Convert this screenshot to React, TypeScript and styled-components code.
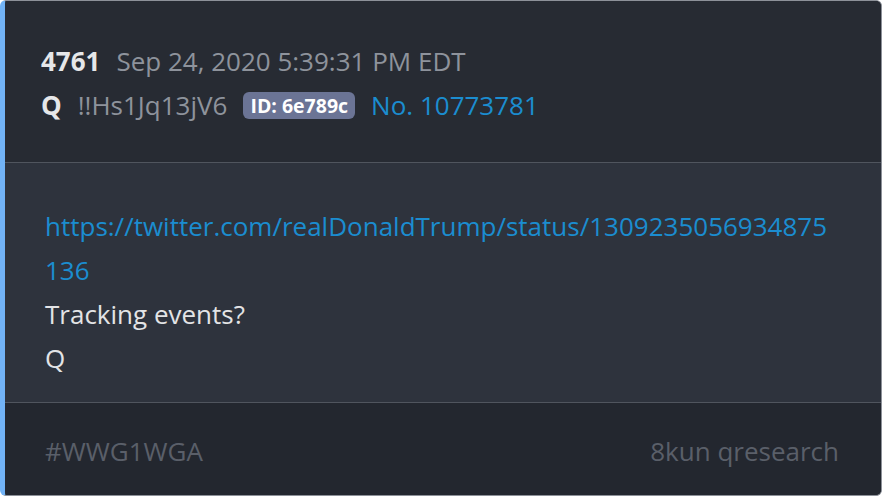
import React from 'react';
import styled, { createGlobalStyle } from 'styled-components';

const GlobalStyle = createGlobalStyle`
  html, body {
    margin: 0;
    padding: 0;
    background: #ffffff;
  }
  body {
    font-family: "Open Sans", "Liberation Sans", sans-serif;
  }
`;

const Card = styled.article`
  box-sizing: border-box;
  width: 882px;
  height: 496px;
  display: flex;
  flex-direction: column;
  border: 1px solid #8d9199;
  border-left: 5px solid #72b3f6;
  border-radius: 6px;
  overflow: hidden;
  background: #2e333d;
  font-size: 26px;
  line-height: 44px;
`;

const Header = styled.header`
  background: #272b33;
  padding: 38px 40px 35px 36px;
  border-bottom: 1px solid #50555e;
`;

const MetaRow = styled.div`
  display: flex;
  align-items: center;
  gap: 16px;
`;

const Strong = styled.span`
  font-weight: 700;
  color: #e6e7e9;
`;

const Muted = styled.span`
  color: #8e939c;
`;

const IdBadge = styled.span`
  background: #6b7495;
  color: #ffffff;
  font-weight: 700;
  font-size: 19.5px;
  line-height: 27px;
  padding: 0 7px;
  border-radius: 6px;
`;

const PostLink = styled.a`
  color: #1b8dd0;
  text-decoration: none;
`;

const Body = styled.section`
  flex: 1;
  padding: 41px 46px 21px 40px;
  color: #e3e4e6;
  border-bottom: 1px solid #50555e;
`;

const Line = styled.div`
  word-break: break-all;
`;

const Footer = styled.footer`
  background: #23272f;
  display: flex;
  justify-content: space-between;
  padding: 26px 42px 22px 40px;
  color: #5a5f69;
`;

export default function App() {
  return (
    <>
      <GlobalStyle />
      <Card>
        <Header>
          <MetaRow>
            <Strong>4761</Strong>
            <Muted>Sep 24, 2020 5:39:31 PM EDT</Muted>
          </MetaRow>
          <MetaRow>
            <Strong>Q</Strong>
            <Muted>!!Hs1Jq13jV6</Muted>
            <IdBadge>ID: 6e789c</IdBadge>
            <PostLink href="#">No. 10773781</PostLink>
          </MetaRow>
        </Header>
        <Body>
          <Line>
            <PostLink href="#">https://twitter.com/realDonaldTrump/status/1309235056934875136</PostLink>
          </Line>
          <Line>Tracking events?</Line>
          <Line>Q</Line>
        </Body>
        <Footer>
          <span>#WWG1WGA</span>
          <span>8kun qresearch</span>
        </Footer>
      </Card>
    </>
  );
}
